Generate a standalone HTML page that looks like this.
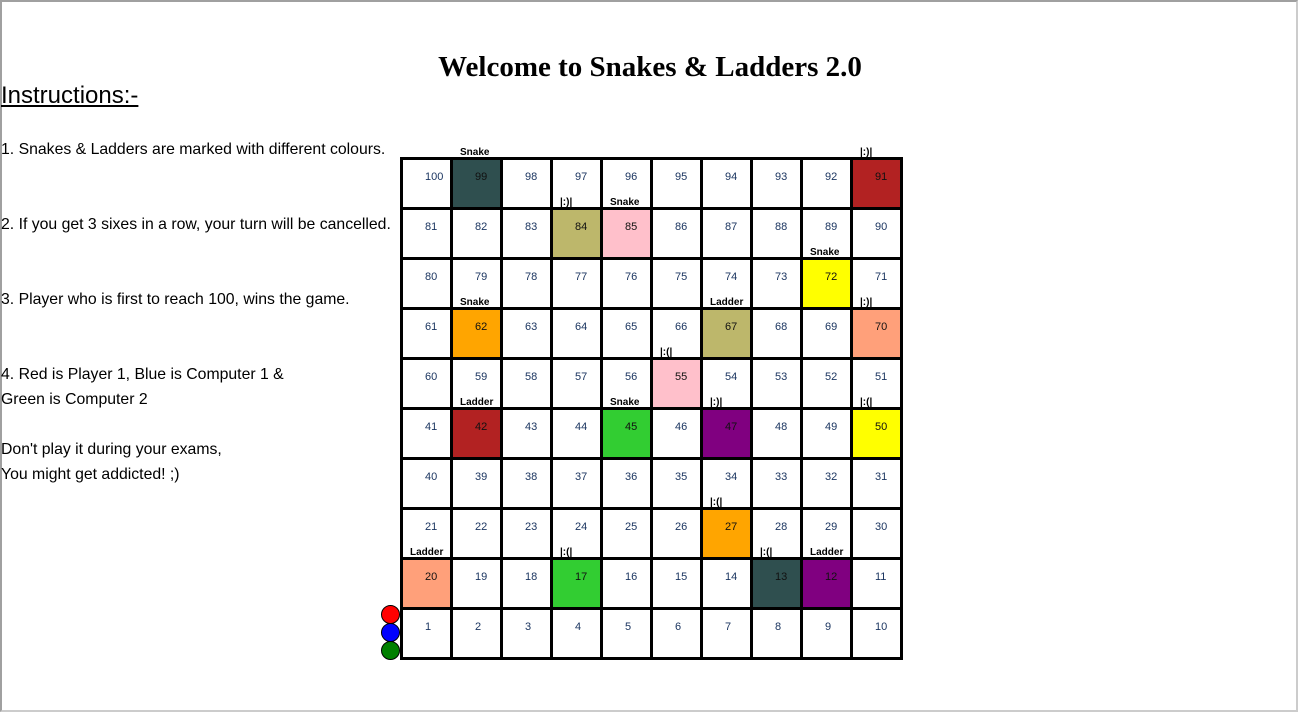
<!DOCTYPE html>
<html><head><meta charset="utf-8"><style>
body{margin:0;width:1298px;height:712px;position:relative;overflow:hidden;background:#fff;font-family:"Liberation Sans",sans-serif}
.frame{position:absolute;left:0;top:0;width:1294px;height:708px;border:2px solid #a0a0a0;border-right-color:#ccc;border-bottom-color:#ccc}
h1{position:absolute;left:0;width:1300px;top:50px;margin:0;text-align:center;font:bold 29px "Liberation Serif",serif;line-height:34px}
.ins{position:absolute;left:1px;top:82px;font-size:24px;text-decoration:underline;line-height:28px}
.t{position:absolute;left:1px;font-size:15.8px;line-height:20px;white-space:nowrap}
.board{position:absolute;left:400px;top:157px;width:497px;height:497px;background:#000;padding:3px;display:grid;grid-template-columns:repeat(10,47px);grid-template-rows:repeat(10,47px);gap:3px}
.board div{background:#fff;font-size:11px;line-height:12px;padding-top:11px;padding-left:22px;text-align:left;color:#1b3560;box-sizing:border-box}
.board div.c{color:#111}
.l{position:absolute;font-weight:bold;font-size:10px;line-height:12px;color:#000}
.dot{position:absolute;left:381px;width:19px;height:19px;border-radius:50%;box-sizing:border-box;border:1px solid #000}
</style></head><body>
<div class="frame"></div>
<h1>Welcome to Snakes &amp; Ladders 2.0</h1>
<div class="ins">Instructions:-</div>
<div class="t" style="top:140px">1. Snakes &amp; Ladders are marked with different colours.</div>
<div class="t" style="top:215px">2. If you get 3 sixes in a row, your turn will be cancelled.</div>
<div class="t" style="top:290px">3. Player who is first to reach 100, wins the game.</div>
<div class="t" style="top:365px">4. Red is Player 1, Blue is Computer 1 &amp;</div>
<div class="t" style="top:390px">Green is Computer 2</div>
<div class="t" style="top:440px">Don't play it during your exams,</div>
<div class="t" style="top:465px">You might get addicted! ;)</div>
<div class="board">
<div>100</div><div class="c" style="background:#2f4f4f">99</div><div>98</div><div>97</div><div>96</div><div>95</div><div>94</div><div>93</div><div>92</div><div class="c" style="background:#b22222">91</div>
<div>81</div><div>82</div><div>83</div><div class="c" style="background:#bdb76b">84</div><div class="c" style="background:#ffc0cb">85</div><div>86</div><div>87</div><div>88</div><div>89</div><div>90</div>
<div>80</div><div>79</div><div>78</div><div>77</div><div>76</div><div>75</div><div>74</div><div>73</div><div class="c" style="background:#ffff00">72</div><div>71</div>
<div>61</div><div class="c" style="background:#ffa500">62</div><div>63</div><div>64</div><div>65</div><div>66</div><div class="c" style="background:#bdb76b">67</div><div>68</div><div>69</div><div class="c" style="background:#ffa07a">70</div>
<div>60</div><div>59</div><div>58</div><div>57</div><div>56</div><div class="c" style="background:#ffc0cb">55</div><div>54</div><div>53</div><div>52</div><div>51</div>
<div>41</div><div class="c" style="background:#b22222">42</div><div>43</div><div>44</div><div class="c" style="background:#32cd32">45</div><div>46</div><div class="c" style="background:#800080">47</div><div>48</div><div>49</div><div class="c" style="background:#ffff00">50</div>
<div>40</div><div>39</div><div>38</div><div>37</div><div>36</div><div>35</div><div>34</div><div>33</div><div>32</div><div>31</div>
<div>21</div><div>22</div><div>23</div><div>24</div><div>25</div><div>26</div><div class="c" style="background:#ffa500">27</div><div>28</div><div>29</div><div>30</div>
<div class="c" style="background:#ffa07a">20</div><div>19</div><div>18</div><div class="c" style="background:#32cd32">17</div><div>16</div><div>15</div><div>14</div><div class="c" style="background:#2f4f4f">13</div><div class="c" style="background:#800080">12</div><div>11</div>
<div>1</div><div>2</div><div>3</div><div>4</div><div>5</div><div>6</div><div>7</div><div>8</div><div>9</div><div>10</div>
</div>
<div class="l" style="left:460px;top:147px">Snake</div>
<div class="l" style="left:860px;top:147px">|:)|</div>
<div class="l" style="left:560px;top:197px">|:)|</div>
<div class="l" style="left:610px;top:197px">Snake</div>
<div class="l" style="left:810px;top:247px">Snake</div>
<div class="l" style="left:460px;top:297px">Snake</div>
<div class="l" style="left:710px;top:297px">Ladder</div>
<div class="l" style="left:860px;top:297px">|:)|</div>
<div class="l" style="left:660px;top:347px">|:(|</div>
<div class="l" style="left:460px;top:397px">Ladder</div>
<div class="l" style="left:610px;top:397px">Snake</div>
<div class="l" style="left:710px;top:397px">|:)|</div>
<div class="l" style="left:860px;top:397px">|:(|</div>
<div class="l" style="left:710px;top:497px">|:(|</div>
<div class="l" style="left:410px;top:547px">Ladder</div>
<div class="l" style="left:560px;top:547px">|:(|</div>
<div class="l" style="left:760px;top:547px">|:(|</div>
<div class="l" style="left:810px;top:547px">Ladder</div>
<div class="dot" style="top:605px;background:#f00"></div>
<div class="dot" style="top:623px;background:#00f"></div>
<div class="dot" style="top:641px;background:#008000"></div>
</body></html>
